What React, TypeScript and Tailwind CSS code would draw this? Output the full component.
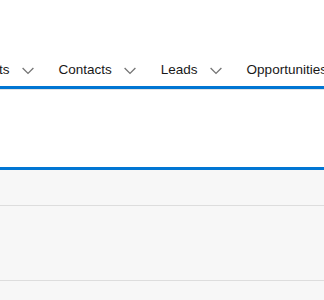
const tabs = ["Accounts", "Contacts", "Leads", "Opportunities", "Reports"];

function Chevron() {
  return (
    <svg width="12" height="8" viewBox="0 0 12 8" fill="none" className="mt-[7px] shrink-0">
      <path d="M0.6 1L6 6.4L11.4 1" stroke="#747474" strokeWidth="1.3" />
    </svg>
  );
}

export default function App() {
  return (
    <div className="h-[300px] w-[324px] overflow-hidden bg-[#f7f7f7] font-['Liberation_Sans',Arial,sans-serif]">
      <div className="bg-white">
        <nav className="flex h-[89px] items-start overflow-hidden border-b-[3px] border-[#0176d3] pt-[60px]">
          <div className="-ml-[46px] flex shrink-0 gap-[25px]">
            {tabs.map((t) => (
              <div key={t} className="flex shrink-0 items-start gap-[12px]">
                <span className="text-[13.5px] leading-5 text-[#181818]">{t}</span>
                <Chevron />
              </div>
            ))}
          </div>
        </nav>
        <div className="h-px bg-[#e3e3e3]" />
        <div className="box-content h-[77px] border-b-[3px] border-[#0176d3]" />
      </div>
      <div className="h-[36px] border-b border-[#dddddd]" />
      <div className="h-[75px] border-b border-[#dddddd]" />
    </div>
  );
}
